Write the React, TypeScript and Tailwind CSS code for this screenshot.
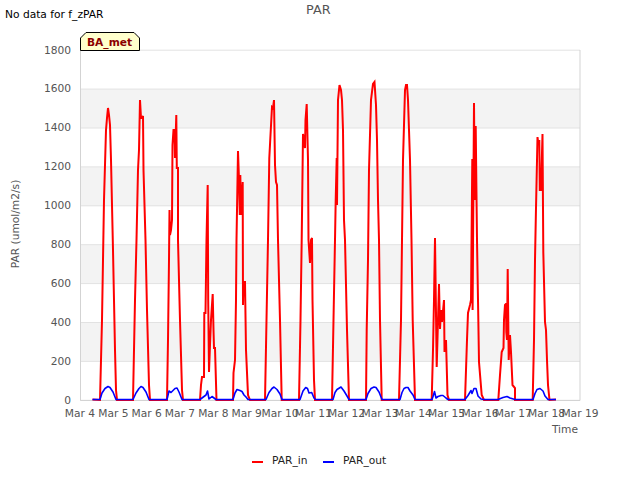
type P = [number, number];

const red: P[][] = [
  [[100,400],[101,360],[102,320],[103,260],[104,200],[105,165],[106,130],[107,118],[108,108],[109,115],[110,125],[111,160],[112,205],[113,250],[114,300],[115,350],[116,390],[117,400]],
  [[133,400],[134,350],[135,300],[136.5,240],[138,170],[139,150],[140,100],[141,118],[142,118],[143,116],[143.5,170],[145.5,240],[147,310],[149,385],[150,400]],
  [[167,400],[168,340],[169,260],[169.5,210],[170,235],[171,230],[172,220],[172.5,145],[173.5,130],[174.5,130],[175,158],[176.3,115],[176.8,168],[178,168],[178,240],[180,320],[182,390],[183,400]],
  [[200,400],[201,385],[202,377],[204,377],[204.3,313],[205.5,313],[206.5,240],[207.7,185],[208.2,300],[209,372],[210,345],[211,320],[212.7,294],[213.5,330],[214,348],[215,348],[216.5,400]],
  [[233,400],[233.5,373],[235,360],[236,300],[236.5,240],[238,151],[239,180],[239.8,215],[240.3,175],[241.2,215],[242.7,182],[243,305],[243.5,282],[245,282],[246,350],[248,395],[250,400]],
  [[265,400],[266.5,320],[268,240],[269.3,158],[270.5,135],[272,107],[273,108],[274,100],[275,165],[276,182],[277,185],[278,240],[280,320],[281.7,400]],
  [[299,400],[300.5,320],[301.7,240],[303,134],[305,148],[305.5,120],[306.7,104],[308,160],[308.5,240],[310,263],[311,240],[312,238],[312.5,300],[314,380],[315,400]],
  [[332,400],[333.5,320],[335,240],[335.7,200],[336.7,158],[337,205],[338,100],[339.5,85],[341,90],[342,100],[343,130],[344,220],[345,240],[347,330],[349,400]],
  [[366,400],[366.7,330],[368,260],[369,170],[371,100],[373,84],[374.5,82],[376,105],[377,140],[378,200],[379,240],[380,320],[381.7,400]],
  [[399,400],[401,320],[402,240],[403,160],[404,125],[405,90],[406,85],[407,85],[408,100],[409,130],[410,160],[411.5,240],[412.7,320],[415,400]],
  [[431.7,400],[433,350],[434,300],[435,238],[436.7,367],[439,284],[440,329],[441,310],[442,322],[444,300],[444.5,352],[446,340],[447.5,395],[449,400]],
  [[465,400],[467,340],[468,313],[470,305],[471,300],[472.3,159],[472.6,310],[474,103],[474.8,200],[475.7,126],[477,240],[478,300],[479,362],[481.7,395],[484,400]],
  [[498.3,400],[500,375],[501.7,352],[503.5,348],[504,320],[505,305],[506,304],[506.3,332],[507,340],[507.7,269],[508.7,360],[510,335],[511,352],[512.5,385],[515,388],[515,400]],
  [[532.7,400],[534,340],[535,260],[536,208],[537.5,137],[538.5,145],[539.3,140],[539.8,190],[541,190],[542.5,134],[543.3,252],[545,322],[546,330],[547,360],[548,385],[549.5,400]],
];

const blue: P[][] = [
  [[100,399.5],[102,393],[105,388.5],[108,386.5],[110,387.5],[113,392],[116,399.5]],
  [[133,399.5],[136,393],[139,388.5],[141,386.5],[143,387.5],[146,392],[149,399.5]],
  [[167,399.5],[169,391],[171,392.5],[175,388.5],[177,388],[179,392],[182,399.5]],
  [[200,399.5],[204,396.5],[206,395],[207.5,391],[209,399],[212,396.5],[214,398],[216,399.5]],
  [[233,399.5],[235,393],[237,389.5],[240,390.5],[242,391.5],[244,395],[246,397],[248,399.5]],
  [[266,399.5],[269,392.5],[272,388.5],[274,387],[277,389.5],[280,394],[282,399.5]],
  [[300,399.5],[303,391],[305.7,387.5],[307.5,388.5],[309,393],[311.7,392.5],[314,398],[315.5,399.5]],
  [[333,399.5],[335,392.5],[337,389.5],[341,387],[344,391],[347,396],[349,399.5]],
  [[366,399.5],[368,393.5],[371,388.5],[374,387],[376,387.5],[379,392],[382,399.5]],
  [[400,399.5],[402,392.5],[404,388.5],[406,387.5],[408,387.5],[410,391],[413,395],[415,399.5]],
  [[432,399.5],[433,396.5],[434.5,391.5],[436,398],[438,396.5],[441,395.5],[443,395.5],[446,398],[448,399.5]],
  [[465,399.5],[468,395.5],[471,390.5],[472,393.5],[474,388.5],[476,388.5],[478,396],[481,399],[484,399.5]],
  [[498,399.5],[503,397.5],[507,396.5],[510,398],[515,399.5]],
  [[533,399.5],[535,393.5],[537,389.5],[540,388.5],[543,391],[545,396],[548,399.5]],
];

const toPoints = (peaks: P[][]) =>
  ["92.5,399.5", ...peaks.flat().map(([x, y]) => `${x},${y}`), "556,399.5"].join(" ");

const yAt = (v: number) => 400.3 - v * 0.1945;
const yTicks = [0, 200, 400, 600, 800, 1000, 1200, 1400, 1600, 1800];
const bands = [200, 600, 1000, 1400];
const days = Array.from({ length: 16 }, (_, i) => i + 4);

export default function App() {
  return (
    <div className="w-[640px] h-[480px] bg-white overflow-hidden font-['DejaVu_Sans',sans-serif]">
      <header className="h-[30px] relative">
        <span className="block text-[10.67px] leading-[13px] text-black pl-[5px] pt-[8px]">No data for f_zPAR</span>
        <span className="absolute left-[306px] top-[2px] text-[12.8px] leading-[16px] text-[#555555]">PAR</span>
      </header>
      <svg width="640" height="420" viewBox="0 30 640 420" className="block" fontFamily="'DejaVu Sans', sans-serif">
        {bands.map((v) => (
          <rect key={v} x={80.5} y={yAt(v + 200)} width={499} height={yAt(v) - yAt(v + 200)} fill="#f3f3f3" />
        ))}
        {yTicks.map((v) => (
          <line key={v} x1={80} x2={580} y1={yAt(v)} y2={yAt(v)} stroke="#e2e2e2" strokeWidth={1} />
        ))}
        <path d="M80.5 50V400.5H580M580 50V400.5" fill="none" stroke="#d3d3d3" strokeWidth={1} />
        {yTicks.map((v) => (
          <text key={v} x={71} y={yAt(v) + 3.3} textAnchor="end" fontSize={10.67} fill="#555555">{v}</text>
        ))}
        {days.map((d, i) => (
          <text key={d} x={80 + i * 33.33} y={417} textAnchor="middle" fontSize={10.67} fill="#555555">{`Mar ${d}`}</text>
        ))}
        <text x={578} y={433} textAnchor="end" fontSize={10.67} fill="#555555">Time</text>
        <text transform="translate(19 224) rotate(-90)" textAnchor="middle" fontSize={10.67} fill="#555555">PAR (umol/m2/s)</text>
        <polyline points={toPoints(red)} fill="none" stroke="#ff0000" strokeWidth={2} strokeLinejoin="miter" />
        <polyline points={toPoints(blue)} fill="none" stroke="#0000ff" strokeWidth={1.6} strokeLinejoin="round" />
        <polygon points="80.5,50.5 80.5,38 86,32.5 134,32.5 139.5,38 139.5,50.5" fill="#ffffcc" stroke="#000000" strokeWidth={1} />
        <text x={87} y={46} fontSize={10.67} fontWeight="bold" fill="#8b0000">BA_met</text>
      </svg>
      <footer className="h-[30px] flex items-start pl-[252px] pt-[4px] text-[10.67px] leading-[14px] text-[#222222]">
        <span className="w-[11px] h-[2px] bg-[#ff0000] mt-[7px]" />
        <span className="ml-[9px] w-[51px]">PAR_in</span>
        <span className="w-[11px] h-[2px] bg-[#0000ff] mt-[7px]" />
        <span className="ml-[9px]">PAR_out</span>
      </footer>
    </div>
  );
}
